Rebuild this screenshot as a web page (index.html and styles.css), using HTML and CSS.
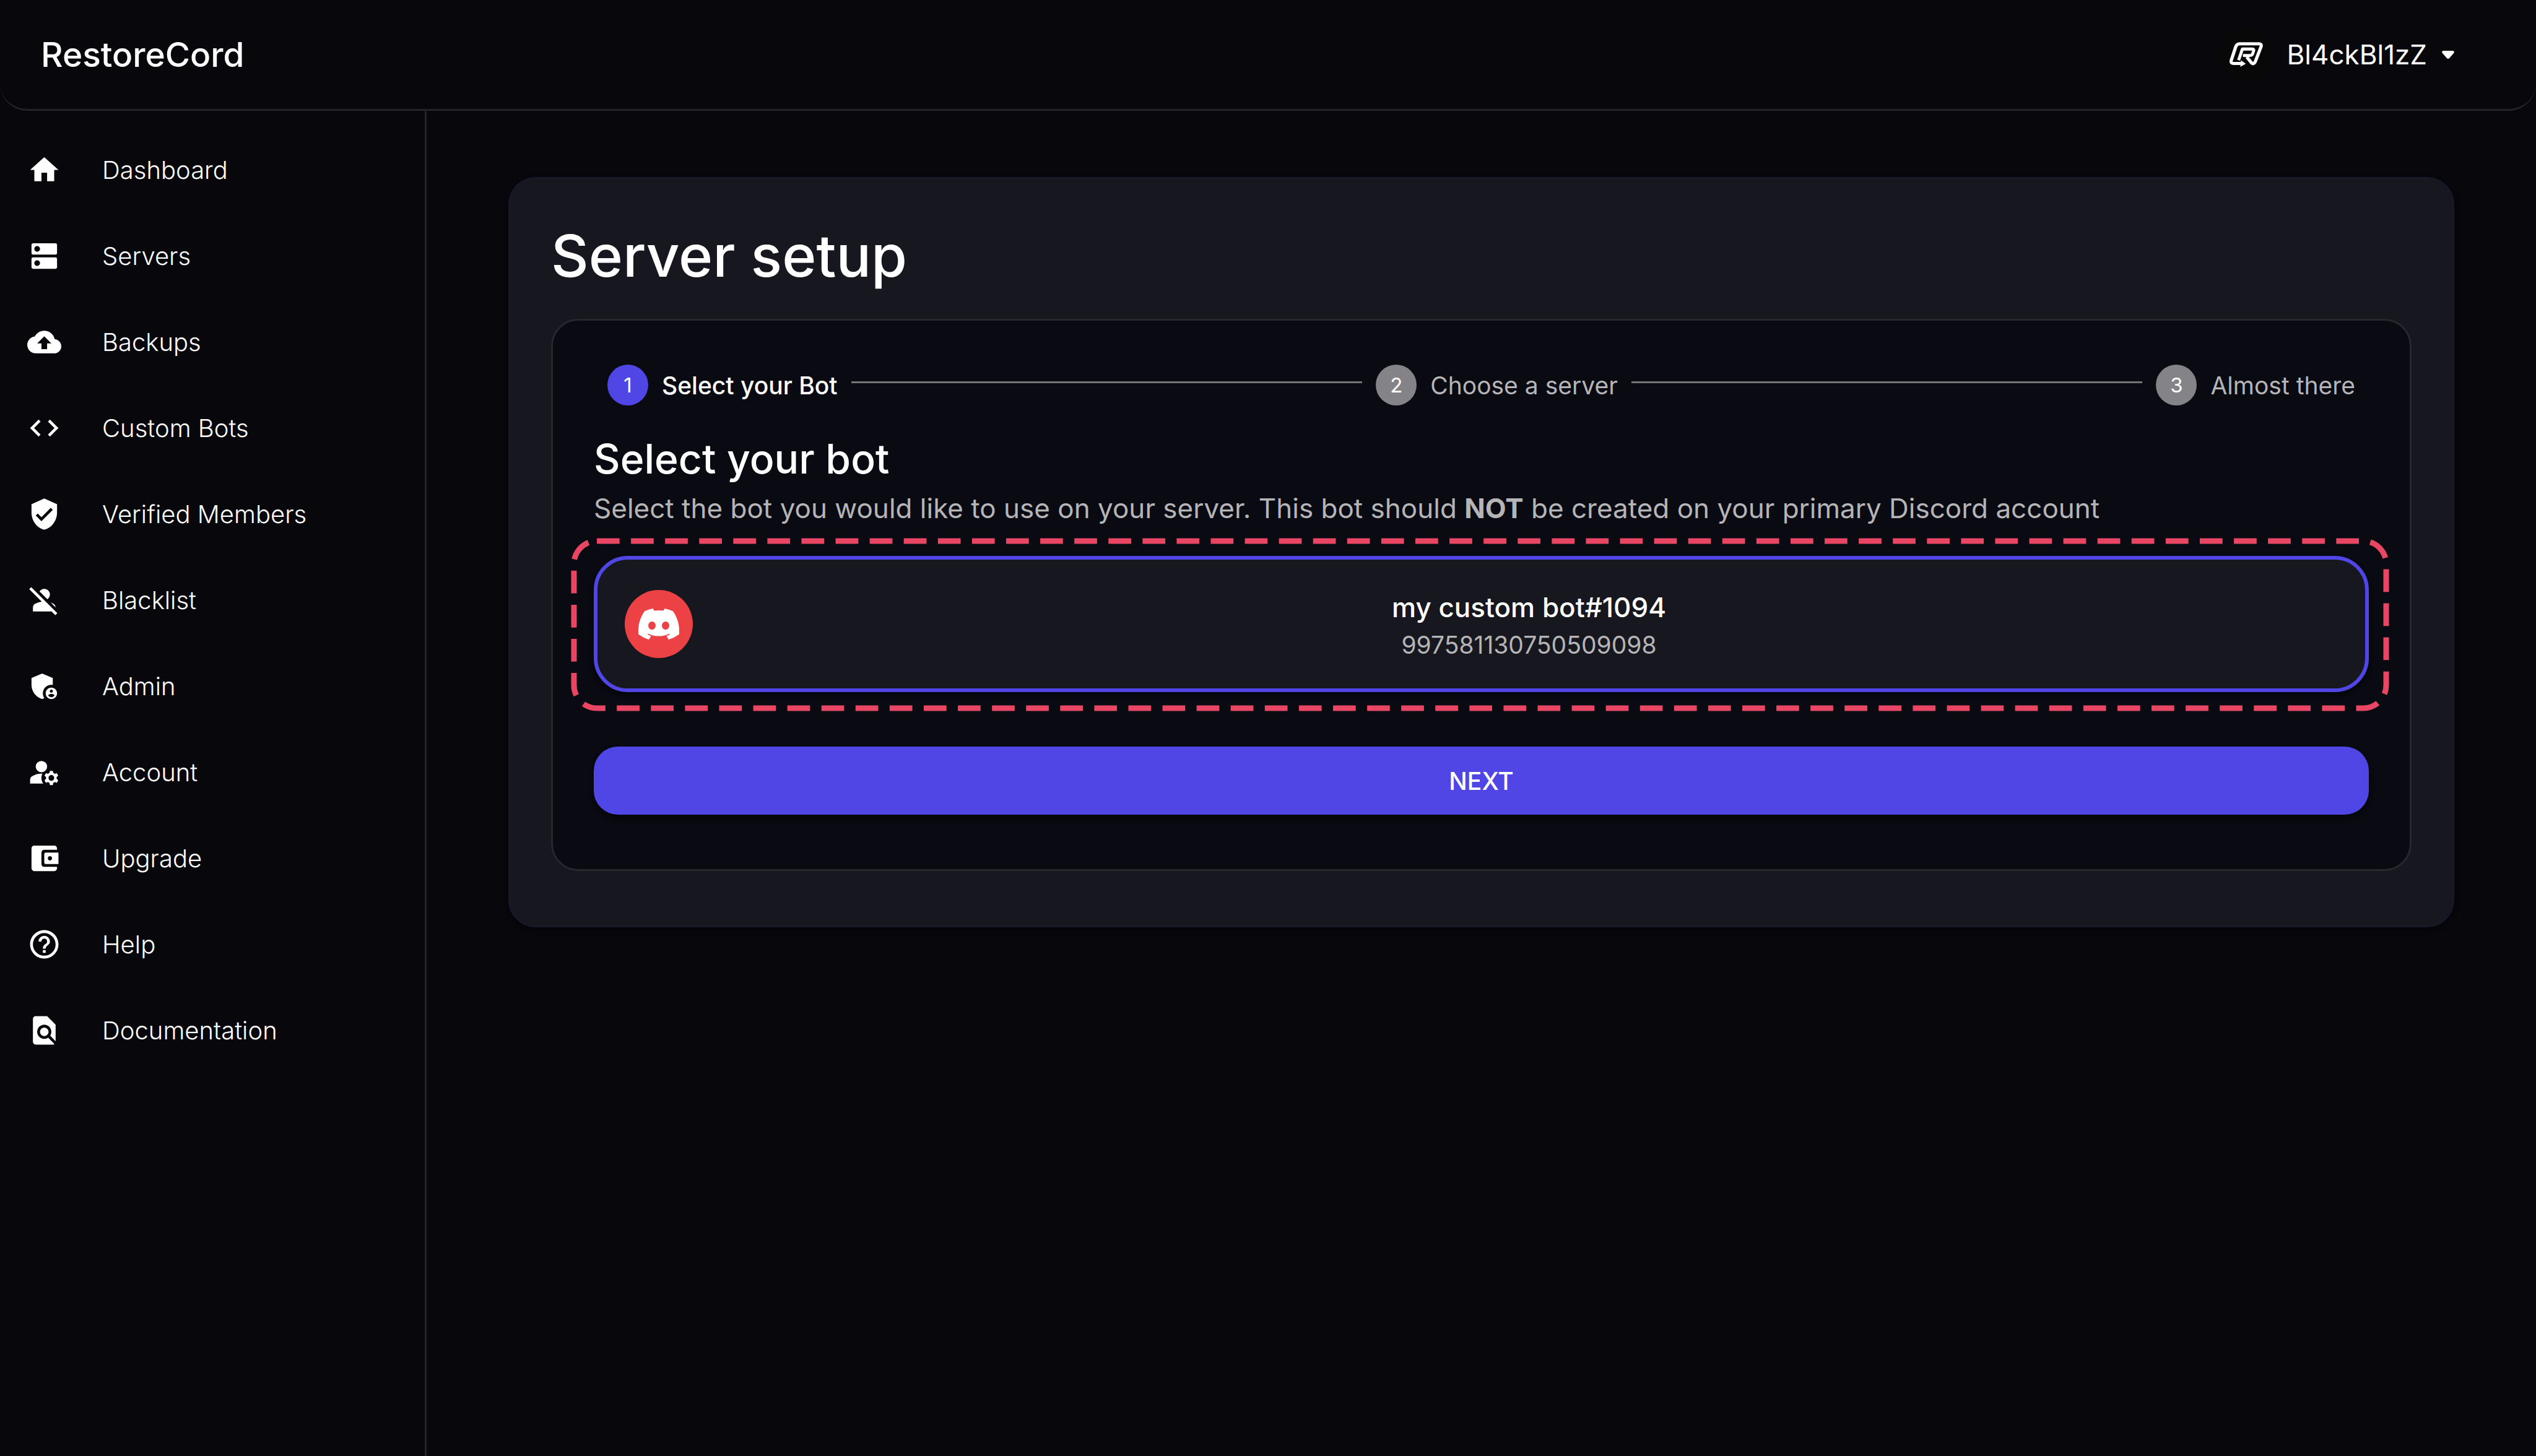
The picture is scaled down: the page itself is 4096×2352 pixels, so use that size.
FILE: index.html
```html
<!DOCTYPE html>
<html lang="en">
<head>
<meta charset="utf-8">
<title>RestoreCord - Server setup</title>
<meta name="viewport" content="width=device-width, initial-scale=1">
<link rel="stylesheet" href="styles.css">
</head>
<body>
<header class="topbar">
  <a class="brand" href="#">RestoreCord</a>
  <button class="account" type="button">
    <span class="account-avatar">
      <svg class="account-logo" viewBox="95 101 177 131" aria-hidden="true">
        <path d="M158 214H115Q100 213 104 198L128 125Q134 110 148 110H252Q266 111 262 125L232 203Q224 220 213 213L186 179" fill="none" stroke="#fff" stroke-width="17" stroke-linejoin="round"/>
        <path d="M156 198 181 216 152 232Z" fill="#fff"/>
        <path d="M143 197 163 138H217Q225 138 223 146L217 164Q213 172 202 172H166" fill="none" stroke="#fff" stroke-width="16" stroke-linejoin="round"/>
      </svg>
    </span>
    <span class="account-name">Bl4ckBl1zZ</span>
    <svg class="account-caret" viewBox="0 0 20 13" aria-hidden="true"><path d="M2 0h16q3 1 1 4l-7 8q-2 2-4 0L1 4Q-1 1 2 0z"/></svg>
  </button>
</header>
<div class="shell">
  <nav class="sidebar" aria-label="Main">
    <a class="nav-item" href="#"><svg class="icon" viewBox="0 0 24 24"><path d="M10 20v-6h4v6h5v-8h3L12 3 2 12h3v8z"/></svg>Dashboard</a>
    <a class="nav-item" href="#"><svg class="icon" viewBox="0 0 24 24"><path d="M20 13H4c-.55 0-1 .45-1 1v6c0 .55.45 1 1 1h16c.55 0 1-.45 1-1v-6c0-.55-.45-1-1-1zM7 19c-1.100 0-2-.9-2-2s.9-2 2-2 2 .9 2 2-.9 2-2 2zM20 3H4c-.55 0-1 .45-1 1v6c0 .55.45 1 1 1h16c.55 0 1-.45 1-1V4c0-.55-.45-1-1-1zM7 9c-1.100 0-2-.9-2-2s.9-2 2-2 2 .9 2 2-.9 2-2 2z"/></svg>Servers</a>
    <a class="nav-item" href="#"><svg class="icon" viewBox="0 0 24 24"><path d="M19.350 10.040C18.670 6.590 15.640 4 12 4 9.110 4 6.600 5.640 5.350 8.040 2.340 8.360 0 10.910 0 14c0 3.310 2.690 6 6 6h13c2.760 0 5-2.240 5-5 0-2.640-2.050-4.780-4.650-4.960zM14 13v4h-4v-4H7l5-5 5 5h-3z"/></svg>Backups</a>
    <a class="nav-item" href="#"><svg class="icon" viewBox="0 0 24 24"><path d="M9.400 16.600 4.800 12l4.600-4.600L8 6l-6 6 6 6 1.400-1.400zm5.200 0 4.600-4.600-4.600-4.600L16 6l6 6-6 6-1.400-1.400z"/></svg>Custom Bots</a>
    <a class="nav-item" href="#"><svg class="icon" viewBox="0 0 24 24"><path d="M12 1 3 5v6c0 5.550 3.840 10.740 9 12 5.160-1.260 9-6.450 9-12V5l-9-4zm-2 16-4-4 1.410-1.410L10 14.170l6.590-6.590L18 9l-8 8z"/></svg>Verified Members</a>
    <a class="nav-item" href="#"><svg class="icon" viewBox="0 0 24 24"><path d="M8.650 5.820C9.360 4.720 10.600 4 12 4c2.210 0 4 1.790 4 4 0 1.400-.72 2.640-1.820 3.350L8.650 5.820zM20 17.170c-.02-1.100-.63-2.110-1.610-2.620-.54-.28-1.130-.54-1.770-.76L20 17.170zM21.190 21.190 2.810 2.810 1.390 4.220l8.890 8.890c-1.810.23-3.390.79-4.670 1.450-.99.51-1.610 1.530-1.610 2.640V20h13.170l2.610 2.610 1.410-1.420z"/></svg>Blacklist</a>
    <a class="nav-item" href="#"><svg class="icon" viewBox="0 0 24 24"><path d="M17 11c.34 0 .67.04 1 .09V6.270L10.500 3 3 6.270v4.910c0 4.540 3.200 8.790 7.500 9.820.55-.13 1.080-.32 1.600-.55-.69-.98-1.100-2.170-1.100-3.450 0-3.310 2.690-6 6-6z"/><path d="M17 13c-2.210 0-4 1.790-4 4s1.790 4 4 4 4-1.790 4-4-1.790-4-4-4zm0 1.380c.62 0 1.120.51 1.120 1.120s-.51 1.120-1.120 1.120-1.120-.51-1.120-1.120.5-1.120 1.120-1.120zm0 5.370c-.93 0-1.740-.46-2.240-1.170.05-.72 1.510-1.080 2.240-1.080s2.190.36 2.240 1.080c-.5.71-1.310 1.170-2.240 1.170z"/></svg>Admin</a>
    <a class="nav-item" href="#"><svg class="icon" viewBox="0 0 24 24"><circle cx="10" cy="8" r="4"/><path d="M10.670 13.020c-.22-.01-.44-.02-.67-.02-2.420 0-4.680.67-6.610 1.820-.88.52-1.390 1.500-1.390 2.530V20h9.260c-.79-1.130-1.260-2.510-1.260-4 0-1.070.25-2.070.67-2.980zM20.750 16c0-.22-.03-.42-.06-.63l1.140-1.010-1-1.730-1.450.49c-.32-.27-.68-.48-1.080-.63L18 11h-2l-.3 1.490c-.4.15-.76.36-1.080.63l-1.450-.49-1 1.730 1.140 1.010c-.03.21-.06.41-.06.63s.03.42.06.63l-1.140 1.010 1 1.730 1.450-.49c.32.27.68.48 1.080.63L16 21h2l.3-1.490c.4-.15.76-.36 1.080-.63l1.450.49 1-1.730-1.140-1.010c.03-.21.06-.41.06-.63zM17 18c-1.100 0-2-.9-2-2s.9-2 2-2 2 .9 2 2-.9 2-2 2z"/></svg>Account</a>
    <a class="nav-item" href="#"><svg class="icon" viewBox="0 0 24 24"><path d="M10 16V8c0-1.100.89-2 2-2h9V5c0-1.100-.9-2-2-2H5c-1.110 0-2 .9-2 2v14c0 1.100.89 2 2 2h14c1.100 0 2-.9 2-2v-1h-9c-1.110 0-2-.9-2-2zm3-8c-.55 0-1 .45-1 1v6c0 .55.45 1 1 1h9V8h-9zm3 5.500c-.83 0-1.500-.67-1.500-1.500s.67-1.500 1.500-1.500 1.500.67 1.500 1.500-.67 1.500-1.500 1.500z"/></svg>Upgrade</a>
    <a class="nav-item" href="#"><svg class="icon" viewBox="0 0 24 24"><path d="M11 18h2v-2h-2v2zm1-16C6.480 2 2 6.480 2 12s4.480 10 10 10 10-4.480 10-10S17.520 2 12 2zm0 18c-4.410 0-8-3.590-8-8s3.590-8 8-8 8 3.590 8 8-3.590 8-8 8zm0-14c-2.210 0-4 1.790-4 4h2c0-1.100.9-2 2-2s2 .9 2 2c0 2-3 1.750-3 5h2c0-2.250 3-2.500 3-5 0-2.210-1.790-4-4-4z"/></svg>Help</a>
    <a class="nav-item" href="#"><svg class="icon" viewBox="0 0 24 24"><path d="M20 19.590V8l-6-6H6c-1.100 0-1.990.9-1.990 2L4 20c0 1.100.89 2 1.990 2H18c.45 0 .85-.15 1.190-.4l-4.430-4.430c-.8.52-1.740.83-2.760.83-2.760 0-5-2.240-5-5s2.240-5 5-5 5 2.240 5 5c0 1.020-.31 1.960-.83 2.750L20 19.590zM9 13c0 1.660 1.340 3 3 3s3-1.340 3-3-1.340-3-3-3-3 1.340-3 3z"/></svg>Documentation</a>
  </nav>
  <main class="content">
    <section class="card">
      <h1 class="card-title">Server setup</h1>
      <div class="panel">
        <ol class="stepper">
          <li class="step step-active"><span class="step-number">1</span>Select your Bot</li>
          <li class="step-line" aria-hidden="true"></li>
          <li class="step"><span class="step-number">2</span>Choose a server</li>
          <li class="step-line" aria-hidden="true"></li>
          <li class="step"><span class="step-number">3</span>Almost there</li>
        </ol>
        <h2 class="panel-title">Select your bot</h2>
        <p class="panel-text">Select the bot you would like to use on your server. This bot should <b>NOT</b> be created on your primary Discord account</p>
        <button class="bot" type="button">
          <span class="bot-avatar">
            <svg class="bot-logo" viewBox="0 0 127 96" aria-hidden="true"><path d="M107.700 8.070A105.150 105.150 0 0 0 81.470 0a72.060 72.060 0 0 0-3.360 6.830 97.680 97.680 0 0 0-29.110 0A72.370 72.370 0 0 0 45.640 0a105.890 105.890 0 0 0-26.250 8.090C2.790 32.650-1.710 56.600.54 80.210a105.730 105.730 0 0 0 32.170 16.150 77.700 77.700 0 0 0 6.890-11.110 68.420 68.420 0 0 1-10.850-5.180c.91-.66 1.800-1.340 2.660-2a75.570 75.570 0 0 0 64.320 0c.87.71 1.760 1.390 2.660 2a68.680 68.680 0 0 1-10.870 5.190 77 77 0 0 0 6.890 11.100 105.250 105.250 0 0 0 32.190-16.140c2.640-27.380-4.510-51.110-18.900-72.150zM42.450 65.690C36.180 65.690 31 60 31 53s5-12.740 11.430-12.740S54 46 53.890 53s-5.050 12.690-11.440 12.690zm42.240 0C78.410 65.690 73.250 60 73.250 53s5-12.740 11.440-12.740S96.230 46 96.120 53s-5.040 12.690-11.430 12.690z"/></svg>
          </span>
          <span class="bot-info">
            <span class="bot-name">my custom bot#1094</span>
            <span class="bot-id">997581130750509098</span>
          </span>
          <svg class="bot-highlight" aria-hidden="true"><rect width="100%" height="100%" rx="37" pathLength="6895"/></svg>
        </button>
        <button class="next" type="button">NEXT</button>
      </div>
    </section>
  </main>
</div>
</body>
</html>
```

FILE: styles.css
```css
* {
  box-sizing: border-box;
}

body {
  margin: 0;
  min-height: 100vh;
  display: flex;
  flex-direction: column;
  background: #07070c;
  color: #fff;
  font-family: Inter, "Liberation Sans", sans-serif;
  font-size: 44px;
}

a {
  color: inherit;
  text-decoration: none;
}

button {
  border: 0;
  padding: 0;
  background: none;
  color: inherit;
  font: inherit;
  cursor: pointer;
}

/* Top bar */
.topbar {
  display: flex;
  align-items: center;
  justify-content: space-between;
  height: 179px;
  padding: 0 132px 0 66px;
  border-bottom: 3px solid #242428;
  border-radius: 0 0 44px 44px;
}

.brand {
  font-size: 55px;
  font-weight: 500;
}

.account {
  display: flex;
  align-items: center;
}

.account-avatar {
  display: flex;
  align-items: center;
  justify-content: center;
  width: 88px;
  height: 88px;
  margin-right: 22px;
  border-radius: 50%;
  background: #080808;
}

.account-logo {
  width: 54px;
  height: 40px;
}

.account-caret {
  width: 20px;
  height: 13px;
  margin-left: 24px;
  fill: #fff;
}

/* Sidebar */
.shell {
  flex: 1;
  display: flex;
}

.sidebar {
  flex: none;
  width: 689px;
  padding-top: 26px;
  border-right: 3px solid #242428;
}

.nav-item {
  display: flex;
  align-items: center;
  gap: 66px;
  height: 139px;
  padding-left: 44px;
  font-size: 40px;
  line-height: 66px;
  font-weight: 300;
}

.icon {
  width: 55px;
  height: 55px;
  fill: #fff;
}

/* Content */
.content {
  flex: 1;
  min-width: 0;
  padding: 107px 132px;
}

.card {
  padding: 66px 66px 88px;
  border: 3px solid #18182b;
  border-radius: 44px;
  background: #17171f;
  box-shadow: 0 3px 8px rgb(0 0 0 / 40%);
}

.card-title {
  margin: 0 0 44px;
  font-size: 94px;
  line-height: 116px;
  font-weight: 500;
}

.panel {
  padding: 66px 66px 88px;
  border: 3px solid #27282c;
  border-radius: 44px;
  background: #090a12;
}

/* Stepper */
.stepper {
  display: flex;
  align-items: center;
  margin: 0;
  padding: 0;
  list-style: none;
  font-size: 39px;
  color: #b5b5b8;
}

.step {
  display: flex;
  align-items: center;
  gap: 22px;
  padding: 5px 22px;
}

.step-active {
  color: #fff;
  font-weight: 500;
}

.step-number {
  width: 66px;
  height: 66px;
  border-radius: 50%;
  background: #848388;
  color: #fff;
  font-size: 33px;
  line-height: 66px;
  font-weight: 400;
  text-align: center;
}

.step-active .step-number {
  background: #4f46e5;
}

.step-line {
  flex: 1;
  height: 3px;
  margin-bottom: 9px;
  background: #757575;
}

/* Bot picker */
.panel-title {
  margin: 37px 0 3px;
  font-size: 66px;
  line-height: 88px;
  font-weight: 500;
}

.panel-text {
  margin: 0;
  color: #b5b5b8;
  line-height: 66px;
}

.bot {
  position: relative;
  display: flex;
  align-items: center;
  gap: 44px;
  width: 100%;
  height: 220px;
  margin-top: 44px;
  padding: 0 44px;
  border: 6px solid #4f46e5;
  border-radius: 55px;
  background: #17171f;
  box-shadow: 0 6px 8px rgb(0 0 0 / 40%);
}

.bot-avatar {
  display: flex;
  align-items: center;
  justify-content: center;
  width: 110px;
  height: 110px;
  border-radius: 50%;
  background: #ed4245;
}

.bot-logo {
  width: 66px;
  height: 50px;
  fill: #fff;
}

.bot-info {
  flex: 1;
  text-align: center;
}

.bot-name,
.bot-id {
  display: block;
}

.bot-name {
  font-weight: 500;
  line-height: 66px;
}

.bot-id {
  color: #b5b5b8;
  font-size: 39px;
  line-height: 55px;
}

/* Dashed frame that floats around the selected bot */
.bot-highlight {
  position: absolute;
  left: -38px;
  top: -30px;
  width: calc(100% + 72px);
  height: calc(100% + 62px);
  overflow: visible;
  pointer-events: none;
}

.bot-highlight rect {
  fill: none;
  stroke: #e84662;
  stroke-width: 9px;
  stroke-dasharray: 40 20;
}

.next {
  width: 100%;
  height: 110px;
  margin-top: 88px;
  border-radius: 39px;
  background: #4f46e5;
  box-shadow: 0 6px 10px rgb(0 0 0 / 40%);
  font-size: 39px;
  font-weight: 500;
}
```
